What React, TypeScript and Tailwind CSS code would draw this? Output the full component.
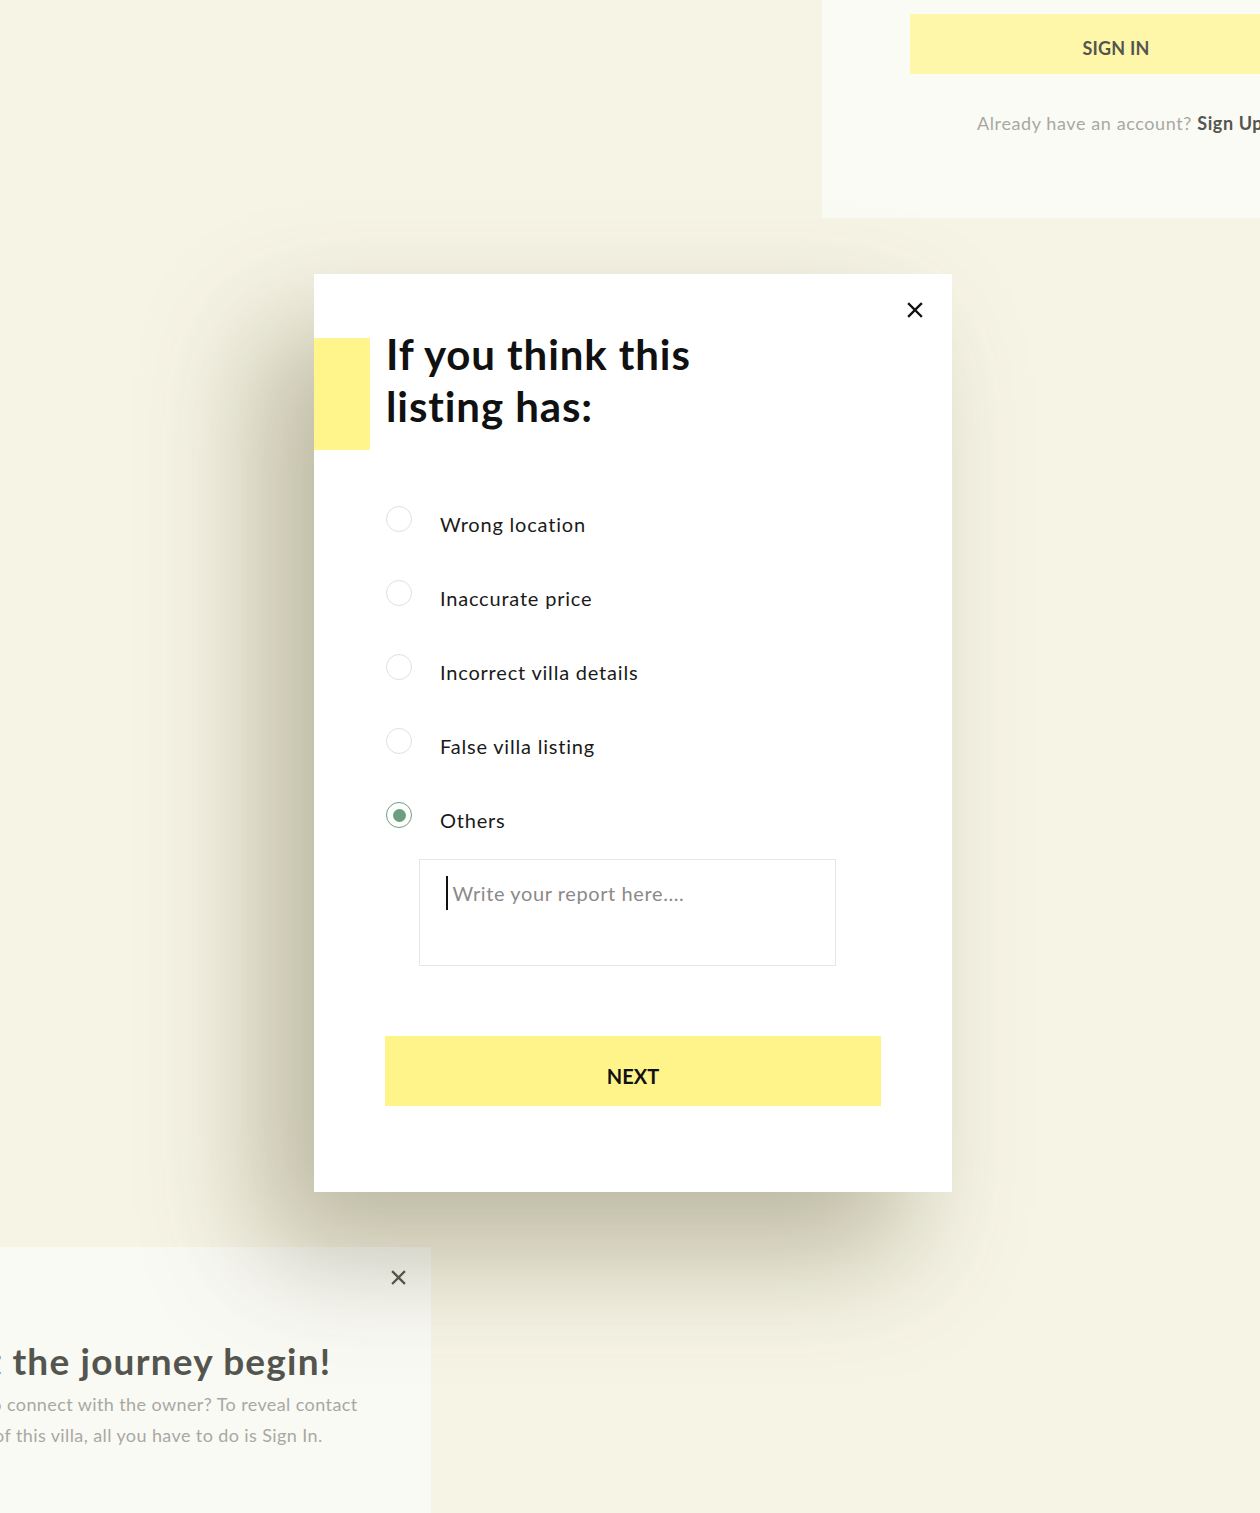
const reasons = [
  { label: "Wrong location", checked: false },
  { label: "Inaccurate price", checked: false },
  { label: "Incorrect villa details", checked: false },
  { label: "False villa listing", checked: false },
  { label: "Others", checked: true },
];

function CloseIcon({ className }: { className?: string }) {
  return (
    <svg viewBox="0 0 16 16" className={className} fill="none" stroke="currentColor" strokeWidth="2.4" strokeLinecap="square">
      <path d="M2 2 L14 14 M14 2 L2 14" />
    </svg>
  );
}

export default function App() {
  return (
    <div
      className="relative w-[1260px] h-[1513px] overflow-hidden bg-[#f6f4e5]"
      style={{ fontFamily: "Lato, 'Open Sans', sans-serif" }}
    >
      {/* Sign in card, top right */}
      <div className="absolute left-[822px] top-0 w-[460px] h-[218px] bg-[#fbfbf6] flex flex-col">
        <div className="ml-[88px] mt-[14px] w-[412px] h-[60px] bg-[#fef7aa] flex items-center justify-center">
          <span className="mt-[8px] text-[18px] font-bold text-[#55554f] tracking-[0.2px]">SIGN IN</span>
        </div>
        <p className="ml-[155px] mt-[36px] text-[18px] tracking-[0.6px] text-[#a8a8a2] whitespace-nowrap">
          Already have an account? <span className="font-bold text-[#55554f]">Sign Up</span>
        </p>
      </div>

      {/* Sign in prompt card, bottom left */}
      <div className="absolute left-[-120px] top-[1247px] w-[551px] h-[300px] bg-[#fafaf5] pl-[52px] pt-[92px]">
        <button className="absolute right-[25px] top-[23px] text-[#55554f]">
          <CloseIcon className="w-[15px] h-[15px]" />
        </button>
        <h2 className="ml-[15px] text-[37px] font-bold tracking-[1.2px] text-[#55554f] leading-[44px] whitespace-nowrap">Let the journey begin!</h2>
        <p className="ml-[3px] mt-[6px] text-[18px] tracking-[0.4px] leading-[31px] text-[#a8a8a2] whitespace-nowrap">
          Want to connect with the owner? To reveal contact
          <br />
          details of this villa, all you have to do is Sign In.
        </p>
      </div>

      {/* Report modal */}
      <div className="absolute left-[314px] top-[274px] w-[638px] h-[918px] bg-white shadow-[-50px_60px_110px_rgba(80,74,40,0.36)] flex flex-col">
        <button className="absolute right-[29px] top-[28px] text-[#111]">
          <CloseIcon className="w-[16px] h-[16px]" />
        </button>

        <div className="flex mt-[64px] h-[112px]">
          <div className="w-[56px] h-full bg-[#fff58a]" />
          <h1 className="ml-[16px] -mt-[10px] text-[42px] tracking-[0.9px] font-bold leading-[52px] text-[#111]">
            If you think this
            <br />
            listing has:
          </h1>
        </div>

        <div className="flex flex-col gap-[48px] mt-[56px] ml-[72px]">
          {reasons.map((r) => (
            <label key={r.label} className="flex items-center h-[26px]">
              <span
                className={
                  r.checked
                    ? "w-[26px] h-[26px] rounded-full border-[1.5px] border-[#6c9f7b] flex items-center justify-center"
                    : "w-[26px] h-[26px] rounded-full border-[1.5px] border-[#e0e0e0]"
                }
              >
                {r.checked && <span className="w-[13px] h-[13px] rounded-full bg-[#6c9f7b]" />}
              </span>
              <span className="ml-[28px] mt-[9px] text-[20px] tracking-[0.8px] text-[#1a1a1a]">{r.label}</span>
            </label>
          ))}
        </div>

        <div className="mt-[31px] ml-[105px] w-[417px] h-[107px] border border-[#e6e6e6] flex items-start pt-[16px] pl-[26px]">
          <span className="w-[1.5px] h-[34px] bg-[#111]" />
          <span className="ml-[5px] mt-[2px] text-[20px] tracking-[0.6px] text-[#8a8a8a]">Write your report here....</span>
        </div>

        <button className="mt-[70px] ml-[71px] w-[496px] h-[70px] bg-[#fff48a] flex items-center justify-center">
          <span className="text-[20px] font-bold text-[#111] mt-[10px]">NEXT</span>
        </button>
      </div>
    </div>
  );
}
